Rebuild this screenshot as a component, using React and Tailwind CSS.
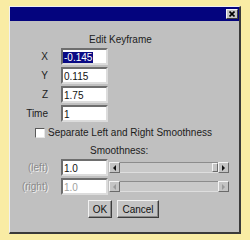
import React from 'react';

const font = { fontFamily: '"Liberation Sans", Arial, sans-serif' };

function Field({ label, value, selected, disabled, etched }) {
  return (
    <div className="flex h-[17px] items-center">
      <div
        className={
          'w-[38px] text-right text-[10px] leading-[12px] ' +
          (etched ? 'text-[#8a8a8a] [text-shadow:1px_1px_0_#f0f0f0]' : 'text-[#1c1c1c]')
        }
      >
        {label}
      </div>
      <div className="ml-[13px] h-[17px] w-[47px] border-2 border-t-[#6e6e6e] border-l-[#6e6e6e] border-r-[#dcdcdc] border-b-[#dcdcdc] bg-white pt-[1px] text-[10px] leading-[13px]">
        {selected ? (
          <span className="inline-block bg-[#0a0a84] pl-[1px] pr-[1px] leading-[11px] text-white">{value}</span>
        ) : (
          <span className={'pl-[1px] ' + (disabled ? 'text-[#a0a0a0]' : 'text-[#111]')}>{value}</span>
        )}
      </div>
    </div>
  );
}

function Arrow({ dir, disabled }) {
  const c = disabled ? '#9a9a9a' : '#111';
  return (
    <div className="flex h-[11px] w-[11px] items-center justify-center border border-t-[#f4f4f4] border-l-[#f4f4f4] border-r-[#6a6a6a] border-b-[#6a6a6a] bg-[#c4c4c4]">
      <svg width="5" height="6" viewBox="0 0 5 6">
        {dir === 'left' ? <path d="M4 0 L1 3 L4 6 Z" fill={c} /> : <path d="M1 0 L4 3 L1 6 Z" fill={c} />}
      </svg>
    </div>
  );
}

function Slider({ label, value, disabled }) {
  return (
    <div className="flex h-[17px] items-center">
      <Field label={label} value={value} disabled={disabled} etched />
      <div className="ml-[1px] flex h-[11px] w-[120px]">
        <Arrow dir="left" disabled={disabled} />
        <div className="flex flex-1 justify-end border-t border-b border-t-[#8c8c8c] border-b-[#dedede] bg-[#c9c9c9]">
          {!disabled && (
            <div className="h-full w-[6px] border border-t-[#f4f4f4] border-l-[#f4f4f4] border-r-[#6a6a6a] border-b-[#6a6a6a] bg-[#c4c4c4]" />
          )}
        </div>
        <Arrow dir="right" disabled={disabled} />
      </div>
    </div>
  );
}

function Btn({ children, w }) {
  return (
    <div
      className={
        'flex h-[18px] items-center justify-center border border-t-[#f2f2f2] border-l-[#f2f2f2] border-r-[#3c3c3c] border-b-[#3c3c3c] bg-[#c4c4c4] text-[10px] text-[#111] shadow-[inset_-1px_-1px_0_#8a8a8a] ' +
        w
      }
    >
      {children}
    </div>
  );
}

export default function App() {
  return (
    <div className="h-[240px] w-[250px] bg-[#f9eca4] pl-[9px] pt-[6px]" style={font}>
      <div className="flex h-[228px] w-[232px] flex-col border-l border-t border-r-2 border-b-2 border-l-[#f0f0f0] border-t-[#f0f0f0] border-r-[#3a3a3a] border-b-[#3a3a3a] bg-[#c0c0c0]">
        <div className="flex h-[14px] items-center justify-end bg-[#04047e] pr-[1px]">
          <div className="flex h-[10px] w-[12px] items-center justify-center border border-t-[#f4f4f4] border-l-[#f4f4f4] border-r-[#3c3c3c] border-b-[#3c3c3c] bg-[#c4c4c4]">
            <svg width="6" height="6" viewBox="0 0 6 6">
              <path d="M0.5 0.5 L5.5 5.5 M5.5 0.5 L0.5 5.5" stroke="#000" strokeWidth="1.6" />
            </svg>
          </div>
        </div>

        <div className="mt-[13px] h-[12px] pl-[79px] text-[10px] leading-[12px] text-[#1c1c1c]">Edit Keyframe</div>

        <div className="mt-[2px] flex flex-col gap-[2px]">
          <Field label="X" value="-0.145" selected />
          <Field label="Y" value="0.115" />
          <Field label="Z" value="1.75" />
          <Field label="Time" value="1" />
        </div>

        <div className="mt-[6px] flex h-[10px] items-start pl-[25px]">
          <div className="h-[10px] w-[10px] border border-t-[#5a5a5a] border-l-[#5a5a5a] border-r-[#e6e6e6] border-b-[#e6e6e6] bg-white" />
          <div className="ml-[3px] text-[10px] leading-[10px] text-[#1c1c1c]">Separate Left and Right Smoothness</div>
        </div>

        <div className="mt-[7px] h-[12px] pl-[80px] text-[10px] leading-[12px] text-[#1c1c1c]">Smoothness:</div>

        <div className="mt-[2px] flex flex-col gap-[2px]">
          <Slider label="(left)" value="1.0" />
          <Slider label="(right)" value="1.0" disabled />
        </div>

        <div className="mt-[5px] flex gap-[5px] pl-[78px]">
          <Btn w="w-[24px]">OK</Btn>
          <Btn w="w-[42px]">Cancel</Btn>
        </div>
      </div>
    </div>
  );
}
